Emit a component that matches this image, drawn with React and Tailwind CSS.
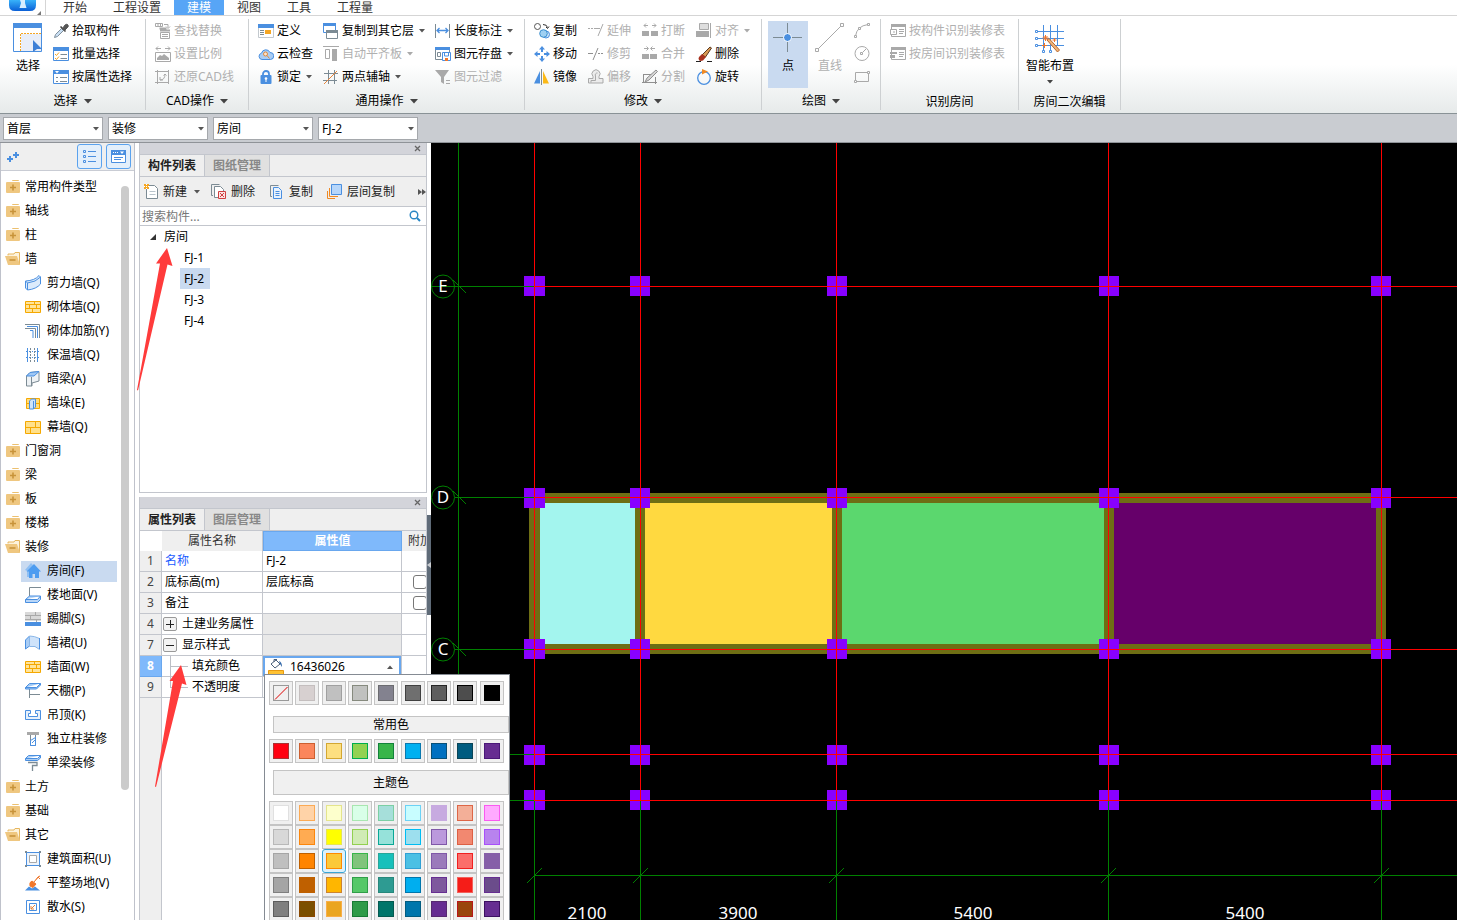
import React from "react";

const B = "#4a8fe0";
const G = "#a9a9a9";
const S = "#7c8b94";
const O = "#f5a623";

const drawings = {
  pick: (
    <>
      <path d="M1.500 14.500l1-3 6-6 2 2-6 6z" fill="#c9def2" stroke="#7f8f9c" />
      <path d="M7.500 3.500l5 5" stroke="#444" strokeWidth="1.600" />
      <path d="M9.500 5.500l2.500-3.500q2-1.500 3 0t-1 3l-2.500 2.500z" fill="#555" stroke="#555" />
    </>
  ),
  batch: (
    <>
      <path d="M0.500 1.500h15v13h-15z" fill="#fff" stroke={B} />
      <path d="M0 1h16v4H0z" fill={B} />
      <path d="M2 8l1.500 1.500L6 6.500M2 12l1.500 1.500L6 10.500" fill="none" stroke={O} />
      <path d="M7.500 8.500H14M7.500 12.500H14" stroke={S} />
    </>
  ),
  attr: (
    <>
      <path d="M0.500 1.500h15v13h-15z" fill="#fff" stroke={B} />
      <path d="M0 1h16v4H0z" fill={B} />
      <path d="M2 2l2 2.500 2-2.500z" fill="#fff" />
      <path d="M3 8.500h2M7 8.500h7M3 12.500h2M7 12.500h7" stroke={S} />
    </>
  ),
  find: (
    <>
      <path d="M0.500 0.500h7v3h-7zM3 0v4M5.500 0v4M9 1.500h4v3M11 3.500l2 2 2-2" fill="none" stroke={G} />
      <path d="M5 7.500h10M4.500 5.500h7" stroke={G} strokeWidth="2" />
      <path d="M5.500 9.500h9v6h-9zM7 11.500h6M7 13.500h6" fill="#fff" stroke={G} />
    </>
  ),
  scale: (
    <>
      <path d="M1 2.500h5M10 2.500h5M3 0.500L1 2.500l2 2M13 0.500l2 2-2 2" fill="none" stroke={G} />
      <path d="M0.500 6.500h15v9h-15z" fill="#fff" stroke={G} />
      <path d="M2 14v-2l3-3 2 1 2-2 5 4v2z" fill={G} />
    </>
  ),
  restore: (
    <path d="M0 2.500h14M2.500 1v14M0 13.500h14M13.500 1v14M5 8v3h3M5 11q5 0 5-6M8.500 6.500L10 5l1.500 1.500" fill="none" stroke={G} />
  ),
  define: (
    <>
      <path d="M0.500 1.500h15v13h-15z" fill="#fff" stroke="#c3c9ce" />
      <path d="M0 1h16v4H0z" fill={B} />
      <path d="M2 7.500h4M2 9.500h4M2 11.500h4" stroke={S} />
      <path d="M7 7h6v4H7z" fill={O} />
    </>
  ),
  cloud: (
    <>
      <path d="M4 13.500a3.200 3.200 0 0 1-.5-6.300A4.500 4.500 0 0 1 12 6.500a3.500 3.500 0 0 1 .5 7z" fill="#a9cdf5" stroke={B} />
      <circle cx="7.500" cy="8" r="2" fill="#fbe3cf" stroke="#e08a3c" />
      <path d="M9 9.500l2.500 3" stroke="#e08a3c" />
    </>
  ),
  lock: (
    <>
      <path d="M5 7V5a3 3 0 0 1 6 0v2" fill="none" stroke={B} strokeWidth="1.800" />
      <rect x="2.500" y="6" width="11" height="9" rx="1" fill={B} />
      <circle cx="8" cy="9.500" r="1.300" fill="#fff" />
      <path d="M8 10v3" stroke="#fff" />
    </>
  ),
  copyFloor: (
    <>
      <path d="M0.500 0.500h12v9h-12z" fill="#fff" stroke={B} />
      <path d="M0 0h13v3H0z" fill={B} />
      <path d="M3.500 7.500h11v8h-11z" fill="#fff" stroke={S} />
      <path d="M3 7h12v3H3z" fill={S} />
    </>
  ),
  flush: (
    <>
      <path d="M0 0.500h16M2.500 3.500h4v9h-4z" fill="none" stroke={G} />
      <path d="M9 3h5v12H9z" fill={G} />
    </>
  ),
  twoPoint: (
    <>
      <path d="M1 4.500h14M0 11.500h14M5.500 1v14M11.500 1v14" stroke={S} />
      <path d="M1 15L14 2" stroke="#e8853a" />
    </>
  ),
  dimension: (
    <>
      <path d="M0.500 1v14M14.500 1v14" fill="none" stroke={S} />
      <path d="M2 7.500h11M4.500 5L2 7.500 4.500 10M10.500 5L13 7.500 10.500 10" fill="none" stroke={B} strokeWidth="1.300" />
    </>
  ),
  store: (
    <>
      <path d="M0.500 2.500h14v11h-14z" fill="#fff" stroke={S} />
      <path d="M0 1h15v3H0z" fill={B} />
      <path d="M2.500 6.500h3v4h-3z" fill="none" stroke={S} />
      <path d="M7.500 6.500h8v8h-8z" fill="#fff" stroke={B} />
      <path d="M9.500 7v3h4V7" fill="none" stroke={B} />
      <path d="M10 12h3v3h-3z" fill="#f0762a" />
    </>
  ),
  filter: (
    <>
      <path d="M0 1h14L9 8v7l-3-2V8z" fill={G} />
      <path d="M11 11.500h4M11 14.500h4" stroke={G} />
    </>
  ),
  copyObj: (
    <>
      <circle cx="3.500" cy="3.500" r="3" fill="#fff" stroke="#555" />
      <circle cx="12" cy="11.500" r="3.500" fill="#cfe6fa" stroke={B} />
      <circle cx="9.500" cy="10.500" r="3.800" fill="#9fd0f2" stroke="#3a8fd0" />
      <path d="M9 1.500q4 0 4.500 3M12 4l1.500 1.500L15 3.500" fill="none" stroke="#333" />
    </>
  ),
  move: (
    <path d="M8 0l3 3.500H9V6H7V3.500H5zM8 16l-3-3.500h2V10h2v2.500h2zM0 8l3.500-3v2H6v2H3.500v2zM16 8l-3.500 3V9H10V7h2.500V5z" fill={B} />
  ),
  mirror: (
    <>
      <path d="M6 2v12.500H0z" fill={B} />
      <path d="M9 2v12.500h6z" fill="#fbb917" />
      <path d="M7.500 0v16" stroke={S} />
    </>
  ),
  extend: <path d="M0 5.500h2M3 5.500h2M6 5.500h2M8 5.500h4M15 1l-5 12" fill="none" stroke={G} />,
  trim: <path d="M0 7.500h5M10 7.500h2M13 7.500h2M10 2L5 14" fill="none" stroke="#8f8f8f" />,
  offset: (
    <>
      <path d="M5 7.500a4 4 0 1 1 6 0v2h4v4.500H0.500V9.500H5z" fill="#ececec" stroke={G} />
      <path d="M3 13.500v-2h4.500V7a2 2 0 0 1 2-3" fill="none" stroke={G} />
    </>
  ),
  breakObj: (
    <>
      <path d="M0 8h7v5H0zM9 8h7v5H9z" fill={G} />
      <path d="M2 2.500h4M10 2.500h4M4 0.500l-2 2 2 2M12 0.500l2 2-2 2" fill="none" stroke={G} />
    </>
  ),
  merge: (
    <>
      <path d="M0 8h7v5H0zM8 8h7v5H8z" fill={G} />
      <path d="M2 2.500h4M9 2.500h4M4.500 0.500l2 2-2 2M10.500 0.500l-2 2 2 2" fill="none" stroke={G} />
    </>
  ),
  split: (
    <>
      <path d="M1.500 5.500h10M1.500 5v8M0 13.500h15M13.500 8v7" fill="none" stroke="#8f8f8f" />
      <path d="M3 13l2-4 9-8 1.500 1.500L7 11z" fill="#d5d5d5" stroke="#8f8f8f" />
    </>
  ),
  align: (
    <>
      <path d="M3.500 0.500h9v6h-9z" fill="#dedede" stroke={G} />
      <path d="M0 8h13v6H0z" fill={G} />
      <path d="M14.500 0v15" stroke={G} />
    </>
  ),
  brush: (
    <>
      <path d="M0 15.500h5M11 15.500h5" stroke="#222" />
      <path d="M6 9l8-8 1.500 1-6 9z" fill="#d99a54" stroke="#5a3a22" />
      <path d="M6 8l4 3-3 3.500q-3 1-4-.5t0-3z" fill="#a8321f" />
    </>
  ),
  rotate: (
    <>
      <circle cx="8" cy="9" r="6.300" fill="none" stroke={B} strokeWidth="1.300" />
      <path d="M6 0l6 2.500L6 5.500z" fill="#f08a24" />
    </>
  ),
  arc: (
    <>
      <path d="M1.500 13Q3 3 14 1.500" fill="none" stroke={G} />
      <path d="M0.500 12.500h2v2h-2zM4.500 4.500h2v2h-2zM13.500 0.500h2v2h-2z" fill="#fff" stroke={G} />
    </>
  ),
  circle: (
    <>
      <circle cx="8" cy="7.500" r="7" fill="none" stroke={G} />
      <path d="M6.500 6.500h2v2h-2zM9 6l3-3" fill="none" stroke={G} />
    </>
  ),
  rect: (
    <>
      <path d="M1.500 3.500h13v9h-13z" fill="none" stroke={G} />
      <path d="M0.500 11.500h2v2h-2zM13.500 2.500h2v2h-2z" fill="#fff" stroke={G} />
    </>
  ),
  byPart: (
    <>
      <path d="M1.500 1.500h14v12h-14z" fill="#fff" stroke={G} />
      <path d="M1 1h15v3H1z" fill={G} />
      <path d="M0.500 6.500h6v5h-6zM3 9h2M9 6.500h5M9 8.500h5M9 10.500h4" fill="#fff" stroke={G} />
    </>
  ),
  byRoom: (
    <>
      <path d="M1.500 1.500h14v12h-14z" fill="#fff" stroke={G} />
      <path d="M1 1h15v3H1zM0 6h7v2H0zM0 9h5v3H0z" fill={G} />
      <path d="M9 6.500h5M9 8.500h5M9 10.500h4" fill="#fff" stroke={G} />
    </>
  ),
  closed: (
    <>
      <path d="M7 2q0-1 1-1h5q1 0 1 1z" fill="#ecc06f" />
      <rect x="1" y="3" width="14" height="11" rx="1" fill="#efc780" />
      <path d="M8 5.500v6M5 8.500h6" stroke="#c8933a" strokeWidth="1.600" />
    </>
  ),
  open: (
    <>
      <path d="M3 4.500V3h6l1-1.500h4.500v12" fill="#fdf3dd" stroke="#e6b65e" />
      <path d="M0 5h12l3 9H3z" fill="#efc780" />
      <path d="M4.500 9h6" stroke="#c8933a" strokeWidth="1.600" />
    </>
  ),
  shear: (
    <>
      <path d="M0.500 6Q10 5.500 14 0.500l1.500 1.500v7q-4 5-13 6l-2-2z" fill="#dcebfb" stroke={B} />
      <path d="M0.500 6l2 2Q11 7 15.500 2M2.500 8v7" fill="none" stroke={B} />
    </>
  ),
  brick: (
    <>
      <path d="M0.500 2.500h15v11h-15z" fill="#ffe49a" stroke="#f5a800" />
      <path d="M0 5.500h16M0 9.500h16M9.500 2v4M4.500 6v4M11.500 6v4M7.500 10v4" stroke="#f5a800" />
    </>
  ),
  rebar: (
    <>
      <path d="M0 1.500h14.500V15M0 5.500h10.500V15" fill="none" stroke={S} />
      <path d="M2 3.500h10.500V15M5 7.500h3V15" fill="none" stroke={B} />
    </>
  ),
  insulate: (
    <>
      <path d="M2.500 1v14M12.500 1v14" stroke={B} />
      <path d="M5.500 1v14M9.500 1v14" stroke={S} strokeDasharray="2 1" />
      <path d="M1 4.500h14M1 10.500h14" stroke={B} strokeDasharray="1 2" />
    </>
  ),
  hidden: (
    <>
      <path d="M1.500 5L5 1.500l9-1V10L7 12v3H1.500z" fill="#eef2f5" stroke={S} />
      <path d="M1.500 5L5 1.500l9-1L9 5z" fill="#9fc8f5" stroke={B} />
      <path d="M6.500 6v9" stroke={S} />
    </>
  ),
  stack: (
    <>
      <path d="M1.500 3.500h13v10h-13z" fill="#ffdc7d" stroke="#f5a800" />
      <path d="M1 8.500h14" stroke="#f5a800" />
      <path d="M4.500 6l2-2h4v8l-2 2h-4zM8.500 6v8" fill="#cfe3fa" stroke={B} />
    </>
  ),
  curtain: (
    <>
      <path d="M0.500 2.500h15v12h-15z" fill="#ffe08a" stroke="#f5a800" />
      <path d="M0 8.500h16M10.500 2v6M5.500 9v6" stroke="#f5a800" />
    </>
  ),
  house: (
    <>
      <path d="M0 7l6-7 3 3-5 5v6H2V8z" fill="#8fbff3" />
      <path d="M9 1l7 7.500h-2V15h-4v-4H7.500v4H4V8.500H1.500z" fill="#4d9cf0" />
    </>
  ),
  floor: (
    <>
      <path d="M4.500 10V0.500H16" fill="none" stroke={S} />
      <path d="M0.500 12.500l4-3.500h11l-3 3.500zM0.500 12.500v3h12l3-3V9" fill="#b8d6f8" stroke={B} />
    </>
  ),
  skirting: (
    <>
      <path d="M0 1h16v9H0z" fill="#d9d9d9" />
      <path d="M0 4.500h16M0 8.500h16M10.500 1v3M5.500 5v3M11.500 9v2" stroke={G} />
      <path d="M0 11h16v4H0z" fill={B} />
    </>
  ),
  dado: (
    <>
      <path d="M0.500 5l4-4v10l-4 3z" fill="#a9cdf5" stroke={B} />
      <path d="M4.500 1q5 0 10 2.500v11L10 11.500H4.500z" fill="#cfe3fa" stroke="#8bb7e8" />
      <path d="M14.500 3v11" stroke={B} />
    </>
  ),
  ceiling: (
    <>
      <path d="M4.500 6v9M4.500 11.500H15" fill="none" stroke={S} />
      <path d="M0.500 4.500l4-4h11l-4 4zM0.500 4.500V6h11l4-4V0.500" fill="#9fc8f5" stroke={B} />
    </>
  ),
  hung: (
    <path d="M0.500 3.500h5v3h-2v3h9v-3h-2v-3h5v9h-15z" fill="#e6f0fb" stroke={B} />
  ),
  column: (
    <>
      <path d="M2 1h12v3H2z" fill={G} />
      <path d="M5.500 4v11M10.500 4v11" fill="none" stroke={S} />
      <path d="M5.500 9.500l5-3v8h-5z" fill="#fff" stroke={B} />
      <path d="M7 12l3-3" stroke={B} />
    </>
  ),
  beam: (
    <>
      <path d="M0.500 3.500l3-3h12l-3 3zM0.500 3.500v2h12l3-2.500V0.500" fill="#a9cdf5" stroke={B} />
      <path d="M3 7.500h9v3H7.500V16" fill="none" stroke={S} strokeWidth="1.300" />
    </>
  ),
  area: (
    <>
      <path d="M1.500 1.500h13v13h-13z" fill="#eef4fb" stroke={B} />
      <path d="M4.500 4.500h7v7h-7z" fill="#fff" stroke={G} />
      <path d="M0 0h2v2H0zM14 0h2v2h-2zM0 14h2v2H0zM14 14h2v2h-2z" fill={S} />
    </>
  ),
  site: (
    <>
      <path d="M0 15.500l4-4 3 2 3-2 5 4z" fill="#4a8fe0" />
      <path d="M5 11q-1-4 2-5l4 3-3 3.500zM9 7l4-5 2-1M13 2l2 2" fill="#f0762a" stroke="#f0762a" />
    </>
  ),
  apron: (
    <>
      <path d="M1.500 1.500h13v13h-13z" fill="#fff" stroke={B} />
      <path d="M4.500 4.500h7v7h-7z" fill="#fff" stroke={B} />
      <path d="M10 6l-4 4M6 7v3h3" fill="none" stroke="#e8853a" />
    </>
  ),
  create: (
    <>
      <path d="M2.500 1.500h8l3 3v10h-11z" fill="#fff" stroke={S} />
      <path d="M5.500 7.500h6M5.500 10.500h6" stroke="#b9c4cc" />
      <path d="M0 0h5v5H0z" fill={O} />
      <path d="M0 2.500h5M2.500 0v5" stroke="#fff" strokeDasharray="1 1" />
    </>
  ),
  remove: (
    <>
      <path d="M2 11.500H0.500v-11h8" fill="none" stroke={S} />
      <path d="M3.500 2.500h6l3 3v8h-9z" fill="#fff" stroke={S} />
      <path d="M7.500 7.500h7v7h-7z" fill="#fbe3e3" stroke="#d04040" />
      <path d="M9 9l4 4M13 9l-4 4" stroke="#d04040" />
    </>
  ),
  duplicate: (
    <>
      <path d="M3 12.500H1.500v-11h8" fill="none" stroke={S} />
      <path d="M4.500 3.500h5l3 3v8h-8z" fill="#e8f2fd" stroke={B} />
      <path d="M6.500 7.500h4M6.500 9.500h4M6.500 11.500h4" stroke={B} />
    </>
  ),
  layerCopy: (
    <>
      <path d="M4.500 0.500h10v10h-10z" fill="#b6d6fa" stroke={B} />
      <path d="M2.500 4v8.500H11M0.500 7v7.500H8" fill="none" stroke="#f08a24" />
    </>
  ),
};

function Icon({ name }) {
  return (
    <svg viewBox="0 0 16 16" className="size-4 shrink-0" aria-hidden="true">
      {drawings[name]}
    </svg>
  );
}

function Caret({ wide = false }) {
  return wide ? (
    <svg viewBox="0 0 8 5" className="h-[5px] w-2 shrink-0" aria-hidden="true">
      <path d="M0 0h8L4 4.500z" fill="#444" />
    </svg>
  ) : (
    <svg viewBox="0 0 6 4" className="h-1 w-1.5 shrink-0" aria-hidden="true">
      <path d="M0 0h6L3 3.500z" fill="currentColor" />
    </svg>
  );
}

function Tool({ icon, label, off, menu }) {
  return (
    <button
      type="button"
      disabled={off}
      className="flex h-[23px] items-center gap-[3px] whitespace-nowrap text-black disabled:text-[#b0b0b0]"
    >
      <Icon name={icon} />
      {label}
      {menu && (
        <span className={off ? "ml-[2px] text-[#aaa]" : "ml-[2px] text-[#555]"}>
          <Caret />
        </span>
      )}
    </button>
  );
}

function ToolColumn({ items }) {
  return (
    <div className="flex flex-col items-start">
      {items.map((t) => (
        <Tool key={t.label} {...t} />
      ))}
    </div>
  );
}

function Group({ label, width, inset, menu = true, children }) {
  return (
    <section className={`flex shrink-0 flex-col border-r border-[#cdd0d2] ${width}`}>
      <div className={`flex h-[69px] ${inset}`}>{children}</div>
      <h2
        className={
          menu
            ? "flex flex-1 items-center justify-center gap-1.5 pt-1 font-normal"
            : "flex flex-1 items-end justify-center font-normal"
        }
      >
        {label}
        {menu && <Caret wide />}
      </h2>
    </section>
  );
}

const menuTabs = ["开始", "工程设置", "建模", "视图", "工具", "工程量"];

function MenuBar() {
  return (
    <header className="flex h-4 shrink-0 overflow-hidden border-b border-[#d5d5d5] bg-white text-[#333]">
      <div className="flex w-[46px] shrink-0 justify-end border-r border-[#d5d5d5]">
        <svg viewBox="0 0 37 15" className="h-[15px] w-[37px]" aria-hidden="true">
          <defs>
            <linearGradient id="logo" x1="0" y1="0" x2="0" y2="1">
              <stop offset="0" stopColor="#38b2fa" />
              <stop offset="1" stopColor="#0a5fd6" />
            </linearGradient>
          </defs>
          <path d="M1 0h27v5q0 6-6 6H7q-6 0-6-6z" fill="url(#logo)" />
          <path d="M12 0h5v3l1.500 5h-7L13 3z" fill="#d7efff" />
          <path d="M33 11v4h-4z" fill="#777" />
        </svg>
      </div>
      <nav className="flex pl-1">
        {menuTabs.map((t) => (
          <button
            type="button"
            key={t}
            className={
              t === "建模"
                ? "h-[15px] bg-[#57a5f6] px-[13px] leading-[13px] text-white"
                : "h-[15px] px-[13px] leading-[13px]"
            }
          >
            {t}
          </button>
        ))}
      </nav>
    </header>
  );
}

function Ribbon() {
  return (
    <div className="flex h-[98px] shrink-0 overflow-hidden border-b border-[#899296] bg-linear-to-b from-white from-50% to-[#e6eaea] py-[3px]">
      <Group label="选择" width="w-[146px]" inset="gap-2.5 pl-[13px]">
        <button type="button" className="flex w-[30px] flex-col items-center gap-[5px] pt-1">
          <svg viewBox="0 0 30 30" className="size-[30px]" aria-hidden="true">
            <path d="M0.500 0.500h28v28H0.500z" fill="#fff" stroke={B} />
            <path d="M0 0h29v5H0z" fill={B} />
            <path d="M8 11h20v17H8z" fill="#e9eef8" />
            <path d="M7.500 28V10.500H28" fill="none" stroke={O} strokeDasharray="2 1" />
            <path d="M20 17l9 9h-5l-4 3z" fill="#3d7fd6" />
          </svg>
          <span className="leading-4">选择</span>
        </button>
        <ToolColumn
          items={[
            { icon: "pick", label: "拾取构件" },
            { icon: "batch", label: "批量选择" },
            { icon: "attr", label: "按属性选择" },
          ]}
        />
      </Group>
      <Group label="CAD操作" width="w-[103px]" inset="pl-[9px]">
        <ToolColumn
          items={[
            { icon: "find", label: "查找替换", off: true },
            { icon: "scale", label: "设置比例", off: true },
            { icon: "restore", label: "还原CAD线", off: true },
          ]}
        />
      </Group>
      <Group label="通用操作" width="w-[276px]" inset="gap-2.5 pl-[9px]">
        <ToolColumn
          items={[
            { icon: "define", label: "定义" },
            { icon: "cloud", label: "云检查" },
            { icon: "lock", label: "锁定", menu: true },
          ]}
        />
        <ToolColumn
          items={[
            { icon: "copyFloor", label: "复制到其它层", menu: true },
            { icon: "flush", label: "自动平齐板", menu: true, off: true },
            { icon: "twoPoint", label: "两点辅轴", menu: true },
          ]}
        />
        <ToolColumn
          items={[
            { icon: "dimension", label: "长度标注", menu: true },
            { icon: "store", label: "图元存盘", menu: true },
            { icon: "filter", label: "图元过滤", off: true },
          ]}
        />
      </Group>
      <Group label="修改" width="w-[237px]" inset="gap-[11px] pl-[9px]">
        <ToolColumn
          items={[
            { icon: "copyObj", label: "复制" },
            { icon: "move", label: "移动" },
            { icon: "mirror", label: "镜像" },
          ]}
        />
        <ToolColumn
          items={[
            { icon: "extend", label: "延伸", off: true },
            { icon: "trim", label: "修剪", off: true },
            { icon: "offset", label: "偏移", off: true },
          ]}
        />
        <ToolColumn
          items={[
            { icon: "breakObj", label: "打断", off: true },
            { icon: "merge", label: "合并", off: true },
            { icon: "split", label: "分割", off: true },
          ]}
        />
        <ToolColumn
          items={[
            { icon: "align", label: "对齐", off: true, menu: true },
            { icon: "brush", label: "删除" },
            { icon: "rotate", label: "旋转" },
          ]}
        />
      </Group>
      <Group label="绘图" width="w-[119px]" inset="pl-1.5">
        <button type="button" className="mt-[2px] flex w-10 flex-col items-center gap-[5px] bg-[#c9daf0] pt-[2px]">
          <svg viewBox="0 0 30 30" className="size-[30px]" aria-hidden="true">
            <path d="M14.500 0v10M14.500 19v10M0 14.500h10M19 14.500h10" stroke={S} />
            <circle cx="14.500" cy="14.500" r="4" fill={B} stroke="#fff" />
          </svg>
          <span className="leading-4">点</span>
        </button>
        <button type="button" disabled className="flex w-11 flex-col items-center gap-[5px] pt-1 text-[#b0b0b0]">
          <svg viewBox="0 0 30 30" className="size-[30px]" aria-hidden="true">
            <path d="M2.500 26.500L27 2" stroke={G} />
            <path d="M0.500 25.500h3v3h-3zM25.500 0.500h3v3h-3z" fill="#fff" stroke={G} />
          </svg>
          <span className="leading-4">直线</span>
        </button>
        <div className="flex flex-col pl-[2px]">
          {[
            ["arc", "弧"],
            ["circle", "圆"],
            ["rect", "矩形"],
          ].map(([n, l]) => (
            <button type="button" disabled key={n} aria-label={l} className="flex h-[23px] items-center">
              <Icon name={n} />
            </button>
          ))}
        </div>
      </Group>
      <Group label="识别房间" width="w-[138px]" inset="pl-[9px]" menu={false}>
        <ToolColumn
          items={[
            { icon: "byPart", label: "按构件识别装修表", off: true },
            { icon: "byRoom", label: "按房间识别装修表", off: true },
          ]}
        />
      </Group>
      <Group label="房间二次编辑" width="w-[102px]" inset="pl-[7px]" menu={false}>
        <button type="button" className="flex flex-col items-center gap-[5px] pt-1">
          <svg viewBox="0 0 30 30" className="size-[30px]" aria-hidden="true">
            <path d="M8.500 2v25M15.500 2v25M22.500 2v20M2 8.500h27M2 15.500h27M2 22.500h27" stroke={B} />
            <path d="M0.500 7.500h2v2h-2zM0.500 14.500h2v2h-2zM0.500 21.500h2v2h-2zM7.500 27.500h2v2h-2zM14.500 27.500h2v2h-2z" fill="#fff" stroke={B} />
            <path d="M12 17l2-1.500 10.500 11.500-2 2z" fill="#f0b47a" stroke="#b9682c" />
            <path d="M10.500 12v6M7.500 15h6M8.500 13l4 4M12.500 13l-4 4M19.500 15v4M17.500 17h4M9.500 20v5M7 22.500h5" stroke="#f0762a" />
          </svg>
          <span className="leading-4">智能布置</span>
          <span className="pt-px text-[#444]">
            <Caret />
          </span>
        </button>
      </Group>
    </div>
  );
}

const filters = [
  ["楼层", "首层"],
  ["构件大类", "装修"],
  ["构件类型", "房间"],
  ["构件", "FJ-2"],
];

function FilterBar() {
  return (
    <div className="flex h-[29px] shrink-0 gap-[5px] border-b border-[#8f9398] bg-[#c9ccd1] px-[3px] pt-[3px]">
      {filters.map(([label, value]) => (
        <label key={label} className="relative block h-[23px] w-[100px]">
          <select
            aria-label={label}
            className="block h-full w-full appearance-none rounded-none border border-[#a5a8ac] bg-white pl-[3px] text-black outline-none"
          >
            <option>{value}</option>
          </select>
          <span className="pointer-events-none absolute inset-y-0 right-1 flex items-center text-[#555]">
            <Caret />
          </span>
        </label>
      ))}
    </div>
  );
}

const palette = [
  { label: "常用构件类型" },
  { label: "轴线" },
  { label: "柱" },
  {
    label: "墙",
    items: [
      ["shear", "剪力墙(Q)"],
      ["brick", "砌体墙(Q)"],
      ["rebar", "砌体加筋(Y)"],
      ["insulate", "保温墙(Q)"],
      ["hidden", "暗梁(A)"],
      ["stack", "墙垛(E)"],
      ["curtain", "幕墙(Q)"],
    ],
  },
  { label: "门窗洞" },
  { label: "梁" },
  { label: "板" },
  { label: "楼梯" },
  {
    label: "装修",
    items: [
      ["house", "房间(F)"],
      ["floor", "楼地面(V)"],
      ["skirting", "踢脚(S)"],
      ["dado", "墙裙(U)"],
      ["brick", "墙面(W)"],
      ["ceiling", "天棚(P)"],
      ["hung", "吊顶(K)"],
      ["column", "独立柱装修"],
      ["beam", "单梁装修"],
    ],
  },
  { label: "土方" },
  { label: "基础" },
  {
    label: "其它",
    items: [
      ["area", "建筑面积(U)"],
      ["site", "平整场地(V)"],
      ["apron", "散水(S)"],
    ],
  },
];

function Palette() {
  return (
    <aside className="flex w-[135px] shrink-0 flex-col border-x border-[#bfc2cb] bg-white">
      <div className="flex h-7 shrink-0 items-center gap-1 border-b border-[#c9ccd4] bg-[#efefef] pr-[3px] pl-[5px]">
        <button type="button" aria-label="添加" className="mr-auto">
          <svg viewBox="0 0 14 14" className="size-3.5" aria-hidden="true">
            <path d="M4 6v6M1 9h6M10 2v6M7 5h6" stroke={B} strokeWidth="2" />
          </svg>
        </button>
        <button
          type="button"
          aria-label="列表视图"
          className="flex size-[25px] items-center justify-center rounded-[3px] border border-[#5aa2ee] bg-[#e3effb]"
        >
          <svg viewBox="0 0 15 15" className="size-[15px]" aria-hidden="true">
            <path d="M1.500 1.500h2v2h-2zM1.500 6.500h2v2h-2zM1.500 11.500h2v2h-2zM6 2.500h8M6 7.500h8M6 12.500h8" fill="none" stroke={B} />
          </svg>
        </button>
        <button
          type="button"
          aria-label="面板视图"
          className="flex size-[25px] items-center justify-center rounded-[3px] border border-[#5aa2ee] bg-[#e3effb]"
        >
          <svg viewBox="0 0 15 15" className="size-[15px]" aria-hidden="true">
            <path d="M0.500 1.500h14v12h-14z" fill="#fff" stroke={B} />
            <path d="M0 1h15v5H0z" fill={B} />
            <path d="M2 3.500h1M4 3.500h1M6 3.500h1" stroke="#fff" />
            <path d="M9 2.500h4l-2 2.500z" fill="#fff" />
            <path d="M3 8.500h9M3 10.500h7" stroke={B} />
          </svg>
        </button>
      </div>
      <div className="flex min-h-0 flex-1 overflow-hidden">
        <ul className="flex-1 pt-1">
          {palette.map((g) => (
            <li key={g.label}>
              <button type="button" className="flex h-6 items-center gap-1 pl-1 whitespace-nowrap">
                <Icon name={g.items ? "open" : "closed"} />
                {g.label}
              </button>
              {g.items && (
                <ul>
                  {g.items.map(([icon, label]) => (
                    <li key={label} className="flex h-6 items-center pl-5">
                      <button
                        type="button"
                        className={
                          icon === "house"
                            ? "flex h-[21px] w-24 items-center gap-1.5 bg-[#c9daf0] pl-1 whitespace-nowrap"
                            : "flex h-[21px] w-24 items-center gap-1.5 pl-1 whitespace-nowrap"
                        }
                      >
                        <Icon name={icon} />
                        {label}
                      </button>
                    </li>
                  ))}
                </ul>
              )}
            </li>
          ))}
        </ul>
        <div className="mt-[15px] mr-[5px] mb-[130px] w-2 rounded-full bg-[#cbcbcb]" />
      </div>
    </aside>
  );
}

function PanelHead({ tabs }) {
  return (
    <>
      <div className="flex h-3 shrink-0 items-center justify-end border-b border-[#c3c6cd] bg-[#d3d4da] pr-[5px]">
        <button type="button" aria-label="关闭">
          <svg viewBox="0 0 7 7" className="size-[7px]" aria-hidden="true">
            <path d="M1 1l5 5M6 1L1 6" stroke="#666" strokeWidth="1.300" />
          </svg>
        </button>
      </div>
      <div className="flex h-[22px] shrink-0 border-b border-[#c3c6cd] bg-[#efefef]">
        <button type="button" className="w-[65px] border-r border-[#c3c6cd] font-bold text-[#222]">
          {tabs[0]}
        </button>
        <button type="button" className="w-[65px] border-r border-[#c3c6cd] bg-[#e0e0e0] font-bold text-[#888]">
          {tabs[1]}
        </button>
      </div>
    </>
  );
}

function ComponentPanel() {
  return (
    <section className="flex min-h-0 flex-[349] flex-col overflow-hidden border-x border-b border-[#c3c6cd] bg-white">
      <PanelHead tabs={["构件列表", "图纸管理"]} />
      <div className="flex h-[30px] shrink-0 items-center gap-3.5 border-b border-[#c3c6cd] bg-[#efefef] pl-1 whitespace-nowrap text-[#222]">
        <button type="button" className="-mr-[3px] flex items-center gap-[3px]">
          <Icon name="create" />
          新建
          <span className="ml-1 text-[#555]">
            <Caret />
          </span>
        </button>
        <button type="button" className="flex items-center gap-1">
          <Icon name="remove" />
          删除
        </button>
        <button type="button" className="flex items-center gap-1">
          <Icon name="duplicate" />
          复制
        </button>
        <button type="button" className="flex items-center gap-1">
          <Icon name="layerCopy" />
          层间复制
        </button>
        <button type="button" aria-label="更多" className="ml-auto">
          <svg viewBox="0 0 8 6" className="h-1.5 w-2" aria-hidden="true">
            <path d="M0 0l4 3-4 3zM4 0l4 3-4 3z" fill="#555" />
          </svg>
        </button>
      </div>
      <div className="flex h-[19px] shrink-0 items-center border-b border-[#c3c6cd] pr-[5px] pl-[2px]">
        <input
          aria-label="搜索构件"
          placeholder="搜索构件..."
          className="h-full min-w-0 flex-1 outline-none placeholder:text-[#777]"
        />
        <button type="button" aria-label="搜索">
          <svg viewBox="0 0 12 12" className="size-3" aria-hidden="true">
            <circle cx="5" cy="5" r="3.800" fill="none" stroke="#2a86c4" strokeWidth="1.400" />
            <path d="M8 8l3 3" stroke="#2a86c4" strokeWidth="2" />
          </svg>
        </button>
      </div>
      <div className="flex h-[21px] items-center gap-[7px] pl-[9px]">
        <svg viewBox="0 0 8 8" className="size-2" aria-hidden="true">
          <path d="M7 1v6H1z" fill="#333" />
        </svg>
        房间
      </div>
      <ul className="pl-10">
        {["FJ-1", "FJ-2", "FJ-3", "FJ-4"].map((n) => (
          <li key={n} className="flex">
            <button
              type="button"
              className={
                n === "FJ-2"
                  ? "h-[21px] w-[30px] bg-[#c9daf0] pl-1 text-left"
                  : "h-[21px] w-[30px] pl-1 text-left"
              }
            >
              {n}
            </button>
          </li>
        ))}
      </ul>
    </section>
  );
}

const swatches = {
  gray: [
    ["none", "#999"], ["#d7d0d0", "#c4bebe"], ["#c0c0c0", "#a0a0a0"], ["#c0c1bf", "#868a7e"], ["#83828f", "#6c6c70"],
    ["#6f6f6f", "#404040"], ["#5e5e5e", "#262626"], ["#4d4d4d", "#000"], ["#000", "#000"],
  ],
  common: [
    ["#ff0010", "#a83232"], ["#fb865c", "#cc5f30"], ["#fddf80", "#d3a732"], ["#92d252", "#00ae4d"], ["#38b54a", "#12823a"],
    ["#00b0f0", "#0a78ae"], ["#0070c0", "#085078"], ["#005c80", "#0a4456"], ["#662d91", "#4a1878"],
  ],
  theme: [
    ["#fff", "#e0e0e0"], ["#ffd3a8", "#fbaa55"], ["#fdffcc", "#e4e48c"], ["#d9ffe8", "#a8e6b0"], ["#a6dfda", "#7ccfa4"],
    ["#c8fdff", "#6cd2f5"], ["#c7aae0", "#c7aae0"], ["#f3af98", "#dd6647"], ["#ffaaff", "#fa5af0"],
    ["#d8d8d8", "#b8b8b8"], ["#ffab52", "#fb860c"], ["#ffff00", "#e6e650"], ["#d0ebb5", "#92d050"], ["#96e2da", "#0aa896"],
    ["#9ddfee", "#00bcf2"], ["#bb99dc", "#8058a8"], ["#f28870", "#dd6044"], ["#b883ee", "#a84ffa"],
    ["#bfbfbf", "#a5a5a5"], ["#ff8400", "#bf6000"], ["#fbc93a", "#ff8a00"], ["#80c47c", "#38b54a"], ["#17c0bb", "#26a699"],
    ["#4bc0e4", "#30a0d4"], ["#9b7abb", "#8058a8"], ["#fb6e6a", "#f02020"], ["#865fa8", "#865fa8"],
    ["#a5a5a5", "#7f7f7f"], ["#bf6000", "#bf6000"], ["#ffb600", "#cc8430"], ["#55c868", "#2f9e48"], ["#2e9b92", "#27887c"],
    ["#00aeef", "#0076ac"], ["#7e589d", "#662d91"], ["#f51d18", "#f2605a"], ["#6b4c8b", "#662d91"],
    ["#7f7f7f", "#5c5c5c"], ["#7b5000", "#8a4800"], ["#eaa520", "#f8ae48"], ["#2e9b48", "#177a34"], ["#00756a", "#065a50"],
    ["#0076ac", "#025c80"], ["#662d91", "#572a70"], ["#9a450c", "#b81818"], ["#662d91", "#3c1060"],
  ],
};

function SwatchGrid({ colors }) {
  return (
    <div className="mx-[3px] grid w-[237px] grid-cols-9 justify-items-center">
      {colors.map(([fill, edge], i) => (
        <button
          type="button"
          key={i}
          aria-label={fill === "none" ? "无颜色" : fill}
          className={
            fill === "#fbc93a"
              ? "flex size-6 items-center justify-center rounded-[3px] border border-[#3aa5d6] bg-[#dcf1fb]"
              : "flex size-6 items-center justify-center border border-[#c4c4c4] bg-[#f0f0f0]"
          }
        >
          <svg viewBox="0 0 16 16" className="size-4" aria-hidden="true">
            <rect x="0.500" y="0.500" width="15" height="15" fill={fill} stroke={edge} />
            {fill === "none" && <path d="M2 14.500L14.500 2" stroke="#e00000" />}
          </svg>
        </button>
      ))}
    </div>
  );
}

function ColorPopup() {
  return (
    <div className="absolute top-[177px] left-[124px] z-10 w-[246px] border border-[#858b93] bg-white pt-1.5">
      <SwatchGrid colors={swatches.gray} />
      <h3 className="mt-[11px] mb-1.5 ml-2 h-[17px] border border-[#c4c4c4] bg-[#f0f0f0] text-center leading-[15px] font-normal">
        常用色
      </h3>
      <SwatchGrid colors={swatches.common} />
      <h3 className="mt-[7px] mb-1.5 ml-2 h-[25px] border border-[#c4c4c4] bg-[#f0f0f0] text-center leading-[23px] font-normal">
        主题色
      </h3>
      <SwatchGrid colors={swatches.theme} />
    </div>
  );
}

const properties = [
  { no: 1, name: "名称", value: "FJ-2", link: true },
  { no: 2, name: "底标高(m)", value: "层底标高", check: true },
  { no: 3, name: "备注", check: true },
  { no: 4, name: "土建业务属性", group: "plus" },
  { no: 7, name: "显示样式", group: "minus" },
  { no: 8, name: "填充颜色", value: "16436026", child: "M7.500 0v21M8 10.500h17", color: true },
  { no: 9, name: "不透明度", child: "M7.500 0v11M8 10.500h17" },
];

function PropertyTable() {
  return (
    <table className="w-[306px] table-fixed border-separate border-spacing-0">
      <colgroup>
        <col className="w-[22px]" />
        <col className="w-[101px]" />
        <col className="w-[139px]" />
        <col />
      </colgroup>
      <thead>
        <tr className="h-5 text-[#333]">
          <th className="bg-white" aria-label="序号" />
          <th className="border-r border-[#c3c6cd] bg-[#efefef] font-normal">属性名称</th>
          <th className="border border-[#69a7ee] bg-[#7fb9fb] font-bold text-white">属性值</th>
          <th className="bg-[#efefef] pl-1.5 text-left font-normal">附加</th>
        </tr>
      </thead>
      <tbody>
        {properties.map((p) => (
          <tr key={p.no} className="h-[21px]">
            <th
              scope="row"
              className={
                p.color
                  ? "border-r border-b border-[#69a7ee] bg-[#7fb9fb] p-0 font-bold text-white"
                  : "border-r border-b border-[#c3c6cd] bg-[#efefef] p-0 font-normal text-[#444]"
              }
            >
              {p.no}
            </th>
            <td className="border-r border-b border-[#c3c6cd] p-0 whitespace-nowrap">
              <div className="flex h-5 items-center pl-px">
                {p.group && (
                  <button
                    type="button"
                    aria-label={p.group === "plus" ? "展开" : "收起"}
                    className="mr-1 flex size-3.5 items-center justify-center rounded-[2px] border border-[#999] bg-[#f3f3f3]"
                  >
                    <svg viewBox="0 0 8 8" className="size-2" aria-hidden="true">
                      <path d={p.group === "plus" ? "M0 4.500h8M4.500 0v8" : "M0 4.500h8"} stroke="#222" />
                    </svg>
                  </button>
                )}
                {p.child && (
                  <svg viewBox="0 0 28 21" className="h-[21px] w-7 shrink-0" aria-hidden="true">
                    <path d={p.child} fill="none" stroke="#bcbfc6" />
                  </svg>
                )}
                <span className={p.link ? "pl-[2px] text-[#1a5cff]" : p.group || p.child ? "pl-px" : "pl-[2px]"}>
                  {p.name}
                </span>
              </div>
            </td>
            <td
              className={
                p.group
                  ? "border-r border-b border-[#c3c6cd] bg-[#e9e9e9] p-0"
                  : "border-r border-b border-[#c3c6cd] p-0"
              }
            >
              {p.color ? (
                <div className="flex h-5 items-center gap-1.5 border-2 border-b-0 border-[#69a7ee] bg-white pr-1.5 pl-[3px]">
                  <svg viewBox="0 0 16 16" className="size-4" aria-hidden="true">
                    <path d="M3 5l5-4 4 4-5 4zM6 3V0.500h3" fill="#fff" stroke="#4a5f7a" />
                    <path d="M11 2q3 1 3 6l-2-3z" fill="#2f66a8" />
                    <path d="M0.500 11.500h15v4h-15z" fill="#ffc233" stroke="#e89a10" />
                  </svg>
                  <input
                    aria-label="填充颜色"
                    defaultValue={p.value}
                    className="h-4 min-w-0 flex-1 outline-none"
                  />
                  <span className="rotate-180 text-[#555]">
                    <Caret />
                  </span>
                </div>
              ) : (
                <span className="pl-[3px]">{p.value}</span>
              )}
            </td>
            <td className="border-b border-[#c3c6cd] p-0 pl-[11px]">
              {p.check && (
                <input
                  type="checkbox"
                  aria-label={`附加 ${p.name}`}
                  className="block size-3.5 appearance-none rounded-[3px] border border-[#777] bg-white"
                />
              )}
            </td>
          </tr>
        ))}
      </tbody>
    </table>
  );
}

function PropertyPanel() {
  return (
    <section className="relative flex min-h-0 flex-[423] flex-col border-x border-[#c3c6cd] bg-white">
      <PanelHead tabs={["属性列表", "图层管理"]} />
      <div className="min-h-0 flex-1 overflow-hidden">
        <PropertyTable />
        <div className="h-full w-[22px] border-r border-[#c3c6cd] bg-[#efefef]" />
      </div>
      <ColorPopup />
    </section>
  );
}

const axesX = [534, 640, 836, 1108, 1381];
const axesY = [286, 497, 649, 754, 800];
const bubbles = [
  ["E", 286],
  ["D", 497],
  ["C", 649],
];
const rooms = [
  [540, 95, "#a3f5ee"],
  [645, 187, "#ffd940"],
  [842, 262, "#5bd76e"],
  [1114, 262, "#66006a"],
];
const spans = [
  [587, "2100"],
  [738, "3900"],
  [973, "5400"],
  [1245, "5400"],
];

function Drawing() {
  return (
    <main className="min-w-0 flex-1 overflow-hidden bg-black">
      <svg className="block h-full w-full" role="img" aria-label="平面图">
        <g transform="translate(-431 -143)" shapeRendering="crispEdges">
          <rect x="529" y="493" width="857" height="161" fill="#6e6e14" />
          {rooms.map(([x, w, fill]) => (
            <rect key={x} x={x} y="503" width={w} height="141" fill={fill} />
          ))}
          {axesX.map((x) =>
            axesY.map((y) => (
              <rect
                key={`${x}-${y}`}
                x={x === 836 || x === 1108 ? x - 9 : x - 10}
                y={y === 497 ? 488 : y === 754 ? 745 : y - 10}
                width={x === 534 ? 21 : 20}
                height="20"
                fill="#8800ff"
              />
            ))
          )}
          <g fill="none" stroke="#008000">
            <path d="M458.500 143v2000M431 286.500h104M455 497.500h79M455 649.500h79M458 754.500h76M458 800.500h76M534 875.500h3000" />
            {axesX.map((x) => (
              <path key={x} d={`M${x + 0.5} 800v1200`} />
            ))}
            {axesX.map((x) => (
              <path key={x} d={`M${x - 7} 883l15-15`} shapeRendering="auto" />
            ))}
            {bubbles.map(([n, y]) => (
              <g key={n} shapeRendering="auto">
                <circle cx="443" cy={y + 0.5} r="11.500" />
                <path d={`M453 ${y - 6}l13 13`} />
              </g>
            ))}
          </g>
          <g stroke="#ff0000">
            {axesX.map((x) => (
              <path key={x} d={`M${x + 0.5} 143V800`} />
            ))}
            {axesY.map((y) => (
              <path key={y} d={`M534 ${y + 0.5}H3500`} />
            ))}
          </g>
          <g fill="#fff" fontSize="17" textAnchor="middle">
            {bubbles.map(([n, y]) => (
              <text key={n} x="443" y={y + 6}>
                {n}
              </text>
            ))}
            {spans.map(([x, n]) => (
              <text key={x} x={x} y="919">
                {n}
              </text>
            ))}
          </g>
        </g>
      </svg>
    </main>
  );
}

function Arrows() {
  return (
    <svg
      className="pointer-events-none absolute top-0 left-0 z-20 h-[777px] w-[264px]"
      viewBox="0 143 264 777"
      fill="#ff3b3b"
      aria-hidden="true"
    >
      <path d="M167 248l5.500 18-5-1.500L138 390.500l-1-.5L160 263.500h-4z" />
      <path d="M181 665l5.500 20-4.500-1.500L156 787l-1-.5L173 681h-3.500z" />
    </svg>
  );
}

export default function App() {
  return (
    <div className="flex h-screen flex-col overflow-hidden bg-white font-['Noto_Sans','Noto_Sans_CJK_SC',sans-serif] text-[12px] leading-4 text-black">
      <MenuBar />
      <Ribbon />
      <FilterBar />
      <div className="relative flex min-h-0 flex-1 overflow-hidden">
        <Palette />
        <div className="ml-1 flex w-72 shrink-0 flex-col gap-1">
          <ComponentPanel />
          <PropertyPanel />
        </div>
        <div className="w-1 shrink-0 pt-[372px]">
          <button
            type="button"
            aria-label="折叠面板"
            className="flex h-[100px] w-full items-center bg-[#5f6b78]"
          >
            <svg viewBox="0 0 4 6" className="h-1.5 w-1" aria-hidden="true">
              <path d="M4 0v6L0 3z" fill="#c9ccd1" />
            </svg>
          </button>
        </div>
        <Drawing />
        <Arrows />
      </div>
    </div>
  );
}
